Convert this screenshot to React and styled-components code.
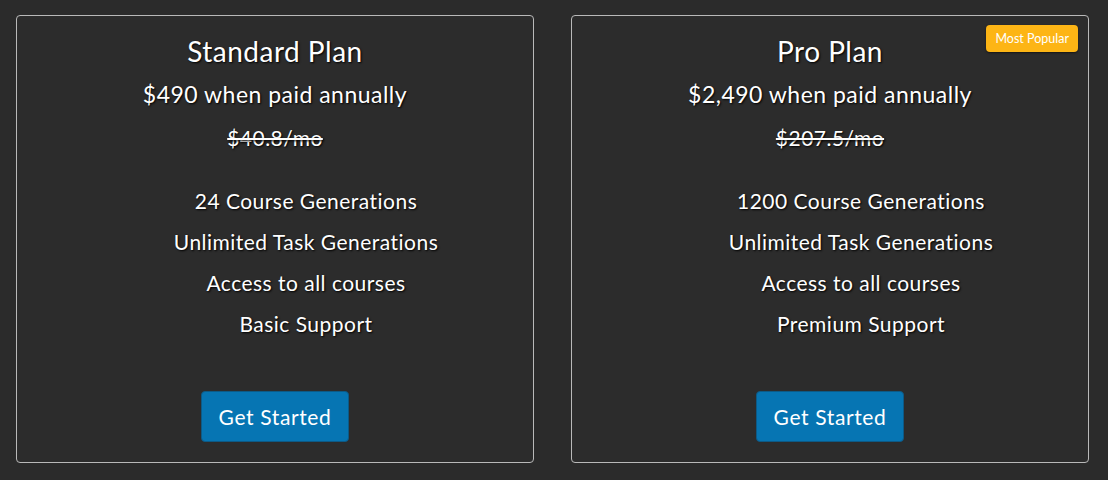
import React from 'react';
import styled, { createGlobalStyle } from 'styled-components';

const GlobalStyle = createGlobalStyle`
	html, body {
		margin: 0;
		padding: 0;
		background: #2b2b2b;
	}
	body {
		font-family: Lato, "Open Sans", sans-serif;
		color: #fff;
	}
`;

const Page = styled('div')`
	display: flex;
	gap: 37px;
	padding: 15px 16px;
	height: 480px;
	box-sizing: border-box;
`;

const Card = styled('div')`
	position: relative;
	width: 518px;
	height: 448px;
	box-sizing: border-box;
	border: 1px solid #b9b9b9;
	border-radius: 4px;
	background-color: #2c2c2c;
	display: flex;
	flex-direction: column;
	align-items: center;
	letter-spacing: 0.03em;
	text-shadow: 1px 1px 2px #000;
`;

const Title = styled('h2')`
	margin: 18px 0 0;
	font-weight: 400;
	font-size: 28px;
	line-height: 34px;
`;

const Price = styled('p')`
	margin: 11px 0 0;
	font-size: 23px;
	line-height: 30px;
`;

const OldPrice = styled('p')`
	margin: 15px 0 0;
	font-size: 21px;
	line-height: 28px;
	text-decoration: line-through;
`;

const Features = styled('ul')`
	list-style: none;
	margin: 35px 0 0;
	padding: 0 0 0 62px;
	display: flex;
	flex-direction: column;
	align-items: center;
	gap: 13px;

	li {
		font-size: 21px;
		line-height: 28px;
	}
`;

const Button = styled('button')`
	margin-top: 53px;
	width: 148px;
	height: 51px;
	border: 1px solid #0d5a86;
	border-radius: 4px;
	background-color: #0675b3;
	color: #fff;
	font-family: inherit;
	font-size: 21px;
	letter-spacing: 0.03em;
	text-shadow: none;
	cursor: pointer;
`;

const Badge = styled('span')`
	position: absolute;
	top: 9px;
	right: 10px;
	padding: 0 9px;
	height: 27px;
	line-height: 27px;
	border-radius: 4px;
	background-color: #fdb515;
	font-size: 12.5px;
	letter-spacing: 0;
	text-shadow: none;
	box-shadow: 0 1px 2px rgba(0, 0, 0, 0.5);
`;

const plans = [
	{
		title: 'Standard Plan',
		price: '$490 when paid annually',
		monthly: '$40.8/mo',
		features: ['24 Course Generations', 'Unlimited Task Generations', 'Access to all courses', 'Basic Support'],
	},
	{
		title: 'Pro Plan',
		price: '$2,490 when paid annually',
		monthly: '$207.5/mo',
		features: ['1200 Course Generations', 'Unlimited Task Generations', 'Access to all courses', 'Premium Support'],
		popular: true,
	},
];

const App = () => (
	<>
		<GlobalStyle />
		<Page>
			{plans.map((plan) => (
				<Card key={plan.title}>
					{plan.popular && <Badge>Most Popular</Badge>}
					<Title>{plan.title}</Title>
					<Price>{plan.price}</Price>
					<OldPrice>{plan.monthly}</OldPrice>
					<Features>
						{plan.features.map((f) => <li key={f}>{f}</li>)}
					</Features>
					<Button>Get Started</Button>
				</Card>
			))}
		</Page>
	</>
);

export default App;
